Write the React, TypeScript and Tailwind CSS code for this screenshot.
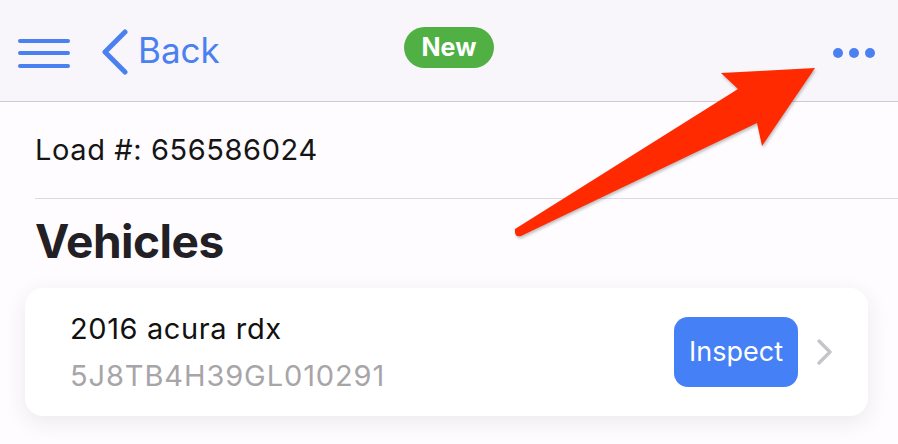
const font = { fontFamily: "Inter, 'Noto Sans', sans-serif" };

const App = () => {
  return (
    <div
      className="relative w-[898px] h-[444px] overflow-hidden bg-[#fefcfe] text-[#111]"
      style={font}
    >
      {/* nav bar */}
      <div className="grid grid-cols-[1fr_auto_1fr] items-center h-[102px] border-b border-[#cfcbd1] bg-[#f8f6fa]">
        <div className="flex items-center pl-[18px]">
          <svg width="52" height="30" viewBox="0 0 52 30" className="mt-[6px]">
            <g stroke="#4a80f0" strokeWidth="4" strokeLinecap="round">
              <line x1="2" y1="2" x2="50" y2="2" />
              <line x1="2" y1="14" x2="50" y2="14" />
              <line x1="2" y1="27" x2="50" y2="27" />
            </g>
          </svg>
          <svg width="28" height="46" viewBox="0 0 28 46" className="ml-[31px] mt-[2px]">
            <polyline
              points="24,3 4,23 24,43"
              fill="none"
              stroke="#4a80f0"
              strokeWidth="5"
              strokeLinecap="round"
              strokeLinejoin="round"
            />
          </svg>
          <span className="ml-[9px] text-[35px] leading-none text-[#4a80f0]">Back</span>
        </div>
        <div className="mb-[6px] h-[41px] px-[18px] flex items-center rounded-full bg-[#50b043] text-white font-bold text-[25px]">
          New
        </div>
        <div className="flex justify-end pr-[22px] mt-[4px]">
          <svg width="44" height="12" viewBox="0 0 44 12">
            <g fill="#4a80f0">
              <circle cx="6" cy="6" r="5" />
              <circle cx="22" cy="6" r="5" />
              <circle cx="38" cy="6" r="5" />
            </g>
          </svg>
        </div>
      </div>

      <div className="pl-[35px]">
        <div className="h-[97px] flex items-center border-b border-[#dddbde] text-[29px] tracking-[0.6px] text-[#151515]">
          Load #: 656586024
        </div>
        <h1 className="mt-[18px] text-[46px] leading-[48px] font-bold tracking-[-0.5px] text-[#222024]">
          Vehicles
        </h1>
      </div>

      <div className="pl-[25px] pr-[30px] mt-[23px]">
        <div className="h-[128px] rounded-[18px] bg-white shadow-[0_6px_22px_rgba(60,40,80,0.09)] flex items-center pl-[45px] pr-[35px]">
          <div className="flex flex-col gap-[13px] flex-1">
            <span className="text-[29px] leading-[34px] tracking-[0.6px] text-[#111]">2016 acura rdx</span>
            <span className="text-[29px] leading-[34px] tracking-[0.9px] text-[#a8a5a9]">5J8TB4H39GL010291</span>
          </div>
          <button className="w-[124px] h-[70px] rounded-[14px] bg-[#4580f6] text-white text-[27px]">
            Inspect
          </button>
          <svg width="17" height="28" viewBox="0 0 17 28" className="ml-[18px]">
            <polyline
              points="3,3 14,14 3,25"
              fill="none"
              stroke="#c5c4c8"
              strokeWidth="3.5"
              strokeLinecap="round"
              strokeLinejoin="round"
            />
          </svg>
        </div>
      </div>

      {/* annotation arrow */}
      <svg
        className="absolute top-0 left-0 pointer-events-none"
        width="898"
        height="444"
        viewBox="0 0 898 444"
        style={{ filter: "drop-shadow(1px 2px 1.5px rgba(0,0,0,0.25))" }}
      >
        <path
          d="M515,229 L738,89 L721,73 L815,68 L762,146 L757,123 L521,236 Q514,238 515,229 Z"
          fill="#ff2a00"
        />
      </svg>
    </div>
  );
};

export default App;
